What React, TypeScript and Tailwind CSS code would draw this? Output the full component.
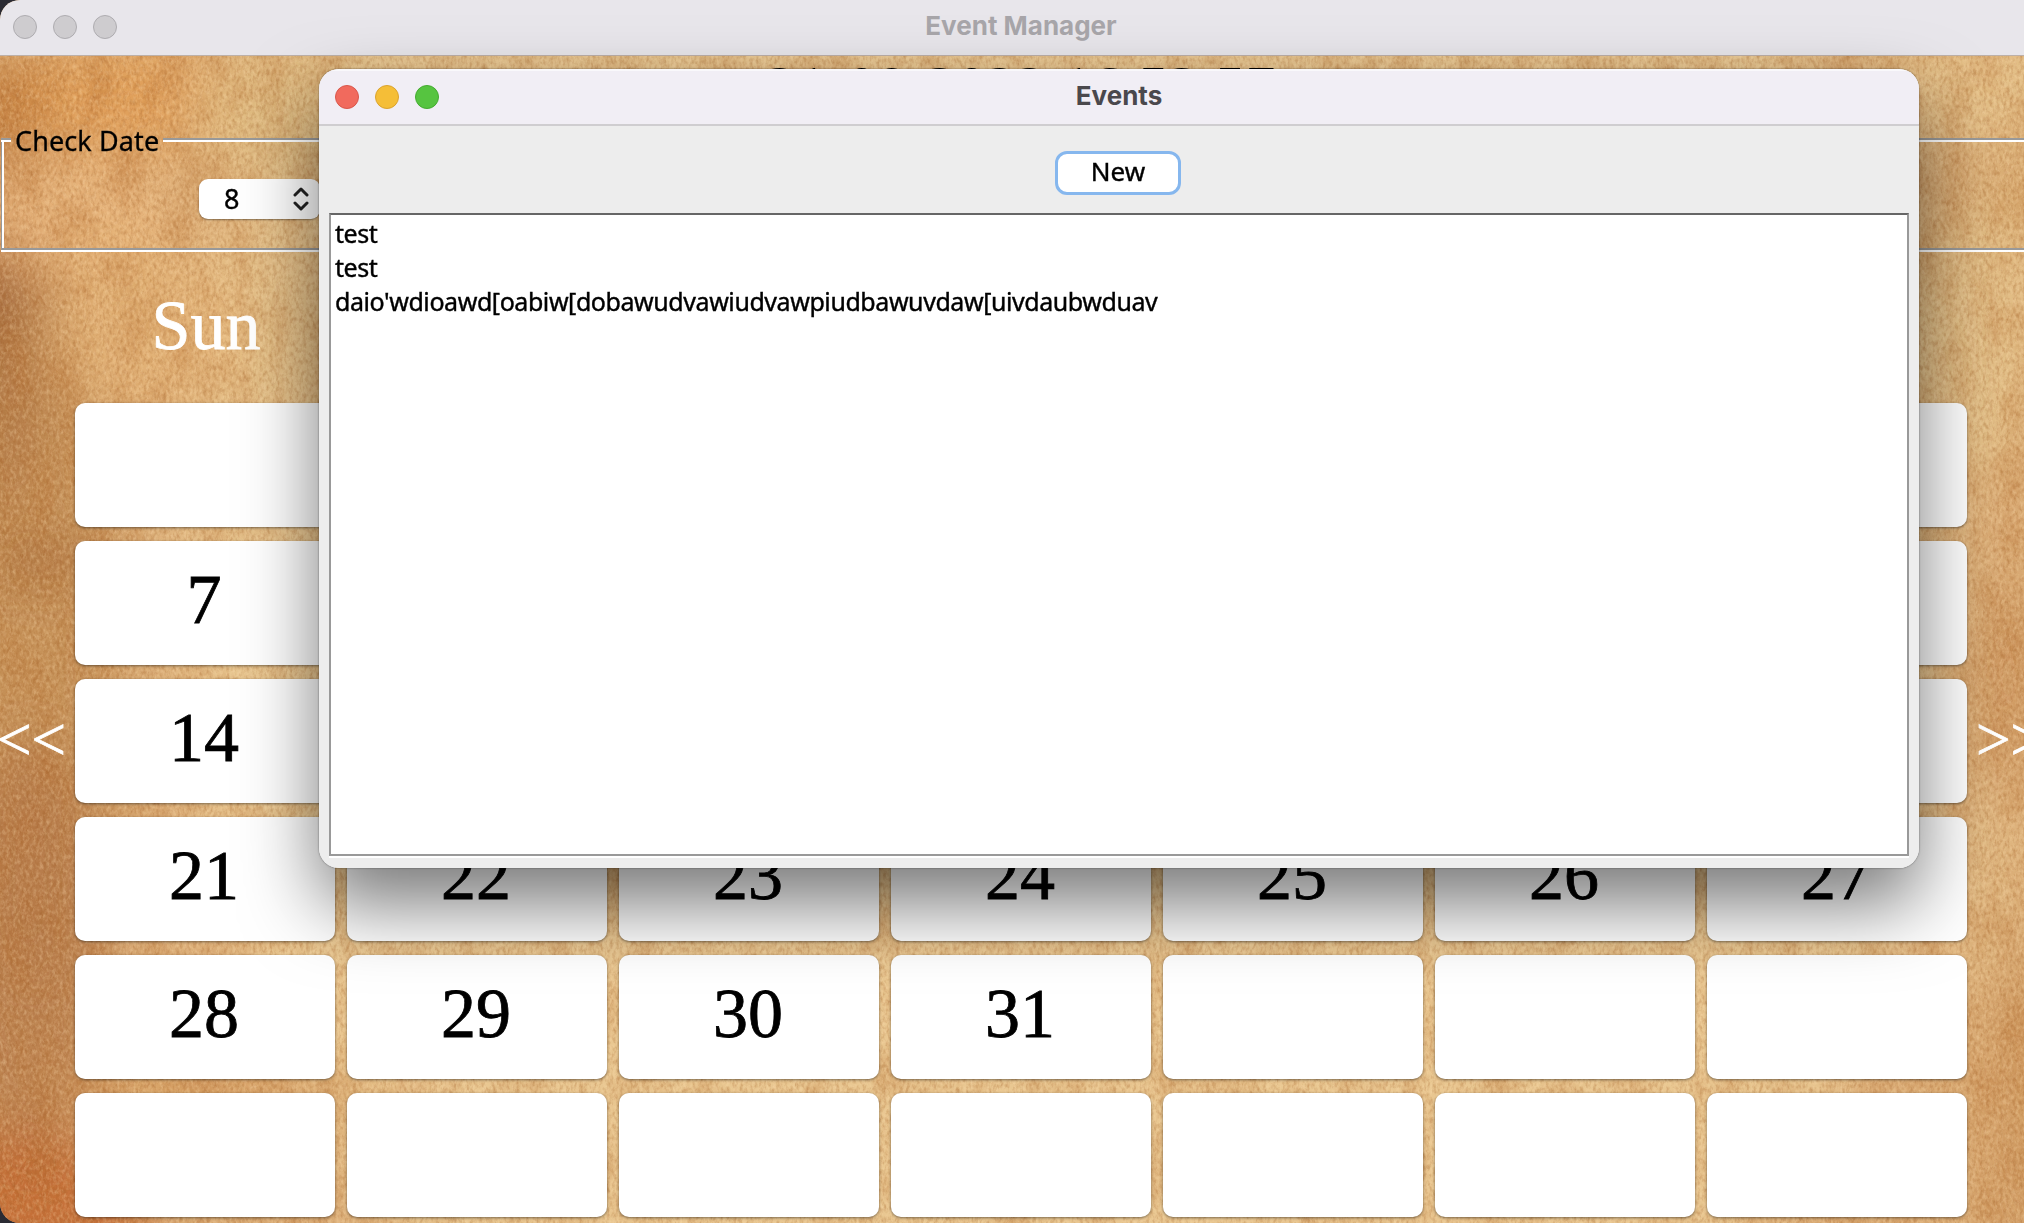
import React from "react";

const days = ["", "", "", "", "", "", "",
  "7", "8", "9", "10", "11", "12", "13",
  "14", "15", "16", "17", "18", "19", "20",
  "21", "22", "23", "24", "25", "26", "27",
  "28", "29", "30", "31", "", "", "",
  "", "", "", "", "", "", ""];

// Stained patches of the parchment: x, y, rx, ry, colour, opacity
const stains: [number, number, number, number, string, number][] = [
  [1070, 600, 880, 1000, "#e9c892", 0.95],
  [0, 350, 50, 160, "#96562e", 0.9],
  [30, 650, 90, 350, "#bd8850", 0.75],
  [30, 960, 80, 220, "#b47848", 0.8],
  [20, 1215, 130, 80, "#c0632c", 0.8],
  [130, 100, 140, 55, "#e09a50", 0.75],
  [0, 130, 40, 80, "#bc7434", 0.8],
  [70, 220, 110, 60, "#e9b47a", 0.8],
  [280, 110, 90, 70, "#e0be84", 0.9],
  [270, 330, 90, 110, "#e5c18a", 0.9],
  [140, 330, 90, 90, "#e2b074", 0.8],
  [40, 560, 60, 24, "#a56a38", 0.7],
  [1980, 90, 120, 60, "#e4c18a", 0.9],
  [2020, 200, 50, 40, "#cf9c5e", 0.6],
  [1970, 340, 70, 140, "#e3c18a", 0.9],
  [2010, 680, 40, 110, "#c48a52", 0.6],
  [1980, 900, 40, 110, "#e3be88", 0.8],
  [2020, 1100, 35, 180, "#c98f55", 0.7],
  [220, 1085, 190, 20, "#cf8c4a", 0.6],
];

function Parchment() {
  return (
    <svg className="absolute inset-0 h-full w-full" viewBox="0 0 2042 1223" preserveAspectRatio="none" aria-hidden="true">
      <defs>
        <filter id="soft" x="-50%" y="-50%" width="200%" height="200%"><feGaussianBlur stdDeviation="26" /></filter>
        <filter id="grain" x="0" y="0" width="100%" height="100%" colorInterpolationFilters="sRGB">
          <feTurbulence type="fractalNoise" baseFrequency="0.3 0.17" numOctaves="3" seed="8" />
          <feColorMatrix values="0 0 0 0 0.62  0 0 0 0 0.36  0 0 0 0 0.14  2.2 0 0 0 -0.9" />
        </filter>
        <filter id="light" x="0" y="0" width="100%" height="100%" colorInterpolationFilters="sRGB">
          <feTurbulence type="fractalNoise" baseFrequency="0.3 0.2" numOctaves="3" seed="21" />
          <feColorMatrix values="0 0 0 0 1  0 0 0 0 0.88  0 0 0 0 0.7  2.2 0 0 0 -0.9" />
        </filter>
        <filter id="blotch" x="0" y="0" width="100%" height="100%" colorInterpolationFilters="sRGB">
          <feTurbulence type="fractalNoise" baseFrequency="0.035 0.02" numOctaves="4" seed="4" />
          <feColorMatrix values="0 0 0 0 0.7  0 0 0 0 0.42  0 0 0 0 0.18  2 0 0 0 -0.85" />
        </filter>
      </defs>
      <rect width="2042" height="1223" fill="#ddb07a" />
      <g filter="url(#soft)">
        {stains.map(([x, y, rx, ry, c, o], i) => <ellipse key={i} cx={x} cy={y} rx={rx} ry={ry} fill={c} opacity={o} />)}
      </g>
      <rect width="2042" height="1223" filter="url(#blotch)" opacity="0.36" />
      <rect width="2042" height="1223" filter="url(#grain)" opacity="0.34" />
      <rect width="2042" height="1223" filter="url(#light)" opacity="0.32" />
    </svg>
  );
}

function Light({ color }: { color: string }) {
  return <span className={`h-6 w-6 rounded-full border ${color}`} />;
}

function EventsWindow() {
  return (
    <section className="absolute top-[69px] left-[319px] flex h-[799px] w-[1600px] flex-col overflow-hidden rounded-[20px] bg-[#ededed]">
      <header className="relative flex h-[57px] shrink-0 items-center justify-center border-b-2 border-[#cfcdd0] bg-[#f1eef5] pb-[2px] shadow-[inset_0_2px_0_#f9f8fb]">
        <div className="absolute top-4 left-4 flex gap-4">
          <Light color="border-[#d9574b] bg-[#f16a5d]" />
          <Light color="border-[#dba32e] bg-[#f5be37]" />
          <Light color="border-[#44ab30] bg-[#56c440]" />
        </div>
        <h2 className="font-[Inter,sans-serif] text-[26px] leading-none font-bold text-[#4a484c]">Events</h2>
      </header>
      <div className="flex h-[87px] shrink-0 justify-center pt-[25px] pr-[2px]">
        <button className="flex h-[44px] w-[126px] items-center justify-center rounded-[12px] border-[3px] border-[#86b7ee] bg-white pb-[5px] font-['Noto_Sans',sans-serif] text-[26px] leading-none text-black [-webkit-text-stroke:0.4px_#000]">New</button>
      </div>
      <div className="mx-[10px] h-[643px] border-2 border-t-[#666] border-r-[#999] border-b-[#999] border-l-[#999] bg-white px-1 pt-px font-['Noto_Sans',sans-serif] text-[25px] leading-[34px] tracking-[-0.43px] text-black [-webkit-text-stroke:0.4px_#000]">
        <p>test</p>
        <p>test</p>
        <p>daio'wdioawd[oabiw[dobawudvawiudvawpiudbawuvdaw[uivdaubwduav</p>
      </div>
      <div className="mx-[10px] h-[2px] bg-white" />
    </section>
  );
}

export default function App() {
  return (
    <div className="relative h-[1223px] w-[2024px] overflow-hidden bg-[#2b2b33]">
      <main className="relative flex h-full w-[2042px] flex-col overflow-hidden rounded-[20px]">
        <Parchment />
        <header className="relative flex h-[56px] shrink-0 items-center justify-center border-b border-[#bdb0a8] bg-[#e8e6eb] pb-1">
          <div className="absolute top-[15px] left-[13px] flex gap-4">
            <Light color="border-[#aeacb0] bg-[#cecccf]" />
            <Light color="border-[#aeacb0] bg-[#cecccf]" />
            <Light color="border-[#aeacb0] bg-[#cecccf]" />
          </div>
          <h1 className="font-[Inter,sans-serif] text-[26px] leading-none font-bold text-[#a8a6aa]">Event Manager</h1>
        </header>
        <p className="relative flex h-[66px] shrink-0 justify-center font-['Liberation_Serif',serif] text-[60px] leading-[62px] text-black">21-08-2022 16:53:57</p>
        <section className="relative ml-[1px] flex h-[130px] shrink-0 flex-col">
          <div className="flex h-[20px] items-end">
            <div className="h-1 w-[10px] border-t-2 border-[#999] bg-white" />
            <span className="w-[152px] pl-1 font-['Noto_Sans',sans-serif] text-[27px] leading-[16px] tracking-[0.1px] whitespace-nowrap text-black [-webkit-text-stroke:0.3px_#000]"><span className="relative top-[7px]">Check Date</span></span>
            <div className="h-1 flex-1 border-t-2 border-[#999] bg-white" />
          </div>
          <div className="flex-1 border-l border-[#999]">
            <div className="h-full border-l-2 border-white pt-[37px] pl-[195px]">
              <div className="flex h-10 w-[121px] items-center justify-between rounded-[9px] bg-white pr-[11px] pl-[25px] font-['Noto_Sans',sans-serif] text-[27px] text-black shadow-[0_1px_2px_#0006] [-webkit-text-stroke:0.4px_#000]">
                <span>8</span>
                <svg width="16" height="24" viewBox="0 0 16 24" fill="none" stroke="#222" strokeWidth="3" strokeLinecap="round" strokeLinejoin="round"><path d="M2 8l6-6 6 6M2 16l6 6 6-6" /></svg>
              </div>
            </div>
          </div>
          <div className="h-1 border-t-2 border-[#999] bg-white" />
        </section>
        <div className="relative h-[151px] shrink-0 pt-[34px] pl-[76px] font-['Liberation_Serif',serif] text-[70px] leading-[80px] text-white">
          <p className="w-[260px] text-center [-webkit-text-stroke:0.8px_#fff]">Sun</p>
        </div>
        <div className="relative flex shrink-0">
          <div className="flex w-[75px] items-center pb-[141px] font-['Liberation_Serif',serif] text-[61px] text-white [-webkit-text-stroke:0.8px_#fff]"><span className="-ml-[3px]">&lt;&lt;</span></div>
          <div className="grid grid-cols-[repeat(7,260px)] grid-rows-[repeat(6,124px)] gap-x-3 gap-y-[14px]">
            {days.map((d, i) => (
              <div key={i} className="flex items-center justify-center rounded-[10px] bg-white pr-[2px] pb-[7px] font-['Liberation_Serif',serif] text-[70px] leading-none text-black shadow-[0_1px_3px_#0007] [-webkit-text-stroke:0.8px_#000]">{d}</div>
            ))}
          </div>
          <div className="flex w-[75px] items-center pb-[141px] pl-[9px] font-['Liberation_Serif',serif] text-[61px] text-white [-webkit-text-stroke:0.8px_#fff]">&gt;&gt;</div>
        </div>
      </main>
      <div className="absolute top-[69px] left-[319px] h-[799px] w-[1600px] rounded-[20px] shadow-[0_0_2px_#0008,0_36px_76px_#0008]" />
      <EventsWindow />
    </div>
  );
}
